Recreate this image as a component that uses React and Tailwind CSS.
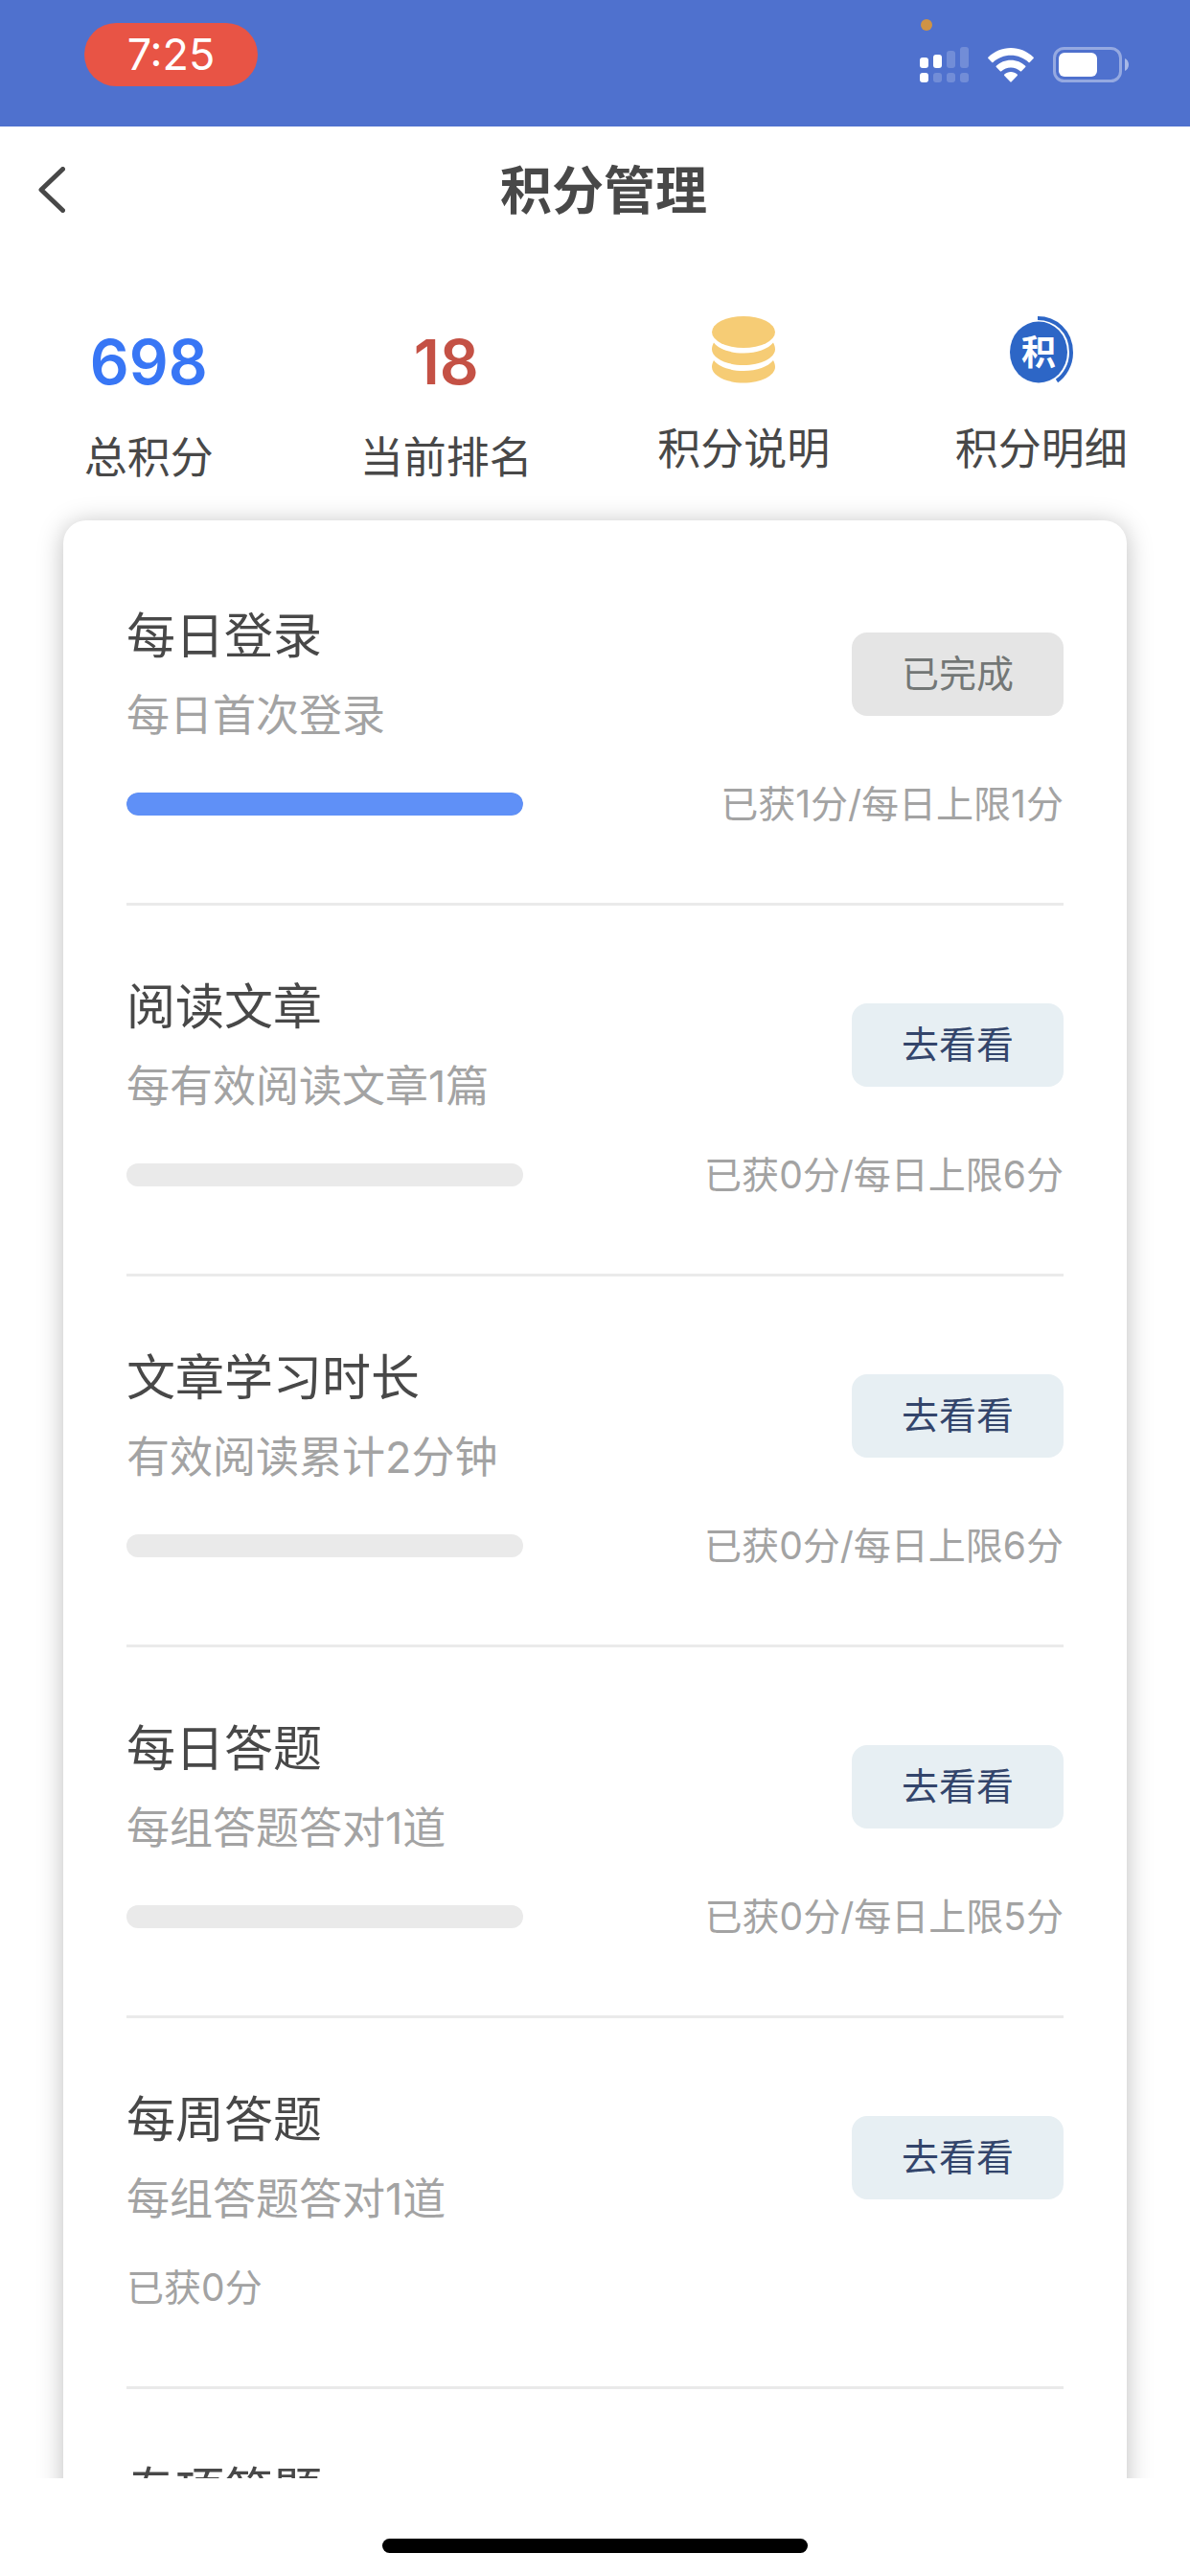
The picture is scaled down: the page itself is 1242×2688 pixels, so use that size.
import { useState } from 'react';

const tasks = [
  { title: '每日登录', desc: '每日首次登录', earned: 1, limit: 1 },
  { title: '阅读文章', desc: '每有效阅读文章1篇', earned: 0, limit: 6 },
  { title: '文章学习时长', desc: '有效阅读累计2分钟', earned: 0, limit: 6 },
  { title: '每日答题', desc: '每组答题答对1道', earned: 0, limit: 5 },
  { title: '每周答题', desc: '每组答题答对1道', earned: 0 },
  { title: '专项答题' },
];

function SignalIcon() {
  return (
    <svg className="w-[51px] h-[37px]" viewBox="0 0 51 37" fill="#fff">
      <rect x="0" y="11" width="9" height="11" rx="3" />
      <rect x="14" y="8" width="9" height="14" rx="3" />
      <rect x="28" y="4" width="9" height="18" rx="3" opacity="0.2" />
      <rect x="42" y="0" width="9" height="22" rx="3" opacity="0.2" />
      <rect x="0" y="27" width="9" height="10" rx="3" />
      <rect x="14" y="27" width="9" height="10" rx="3" opacity="0.2" />
      <rect x="28" y="27" width="9" height="10" rx="3" opacity="0.2" />
      <rect x="42" y="27" width="9" height="10" rx="3" opacity="0.2" />
    </svg>
  );
}

function WifiIcon() {
  return (
    <svg className="w-12 h-9" viewBox="0 0 48 36" fill="#fff">
      <path d="M24 0C33 0 41.500 3.700 47.600 9.700Q48.200 10.400 47.600 11L43.800 15Q43.200 15.600 42.500 15C37.600 10.500 31 7.800 24 7.800S10.400 10.500 5.500 15Q4.800 15.600 4.200 15L.400 11Q-.200 10.400 .400 9.700C6.500 3.700 15 0 24 0Z" />
      <path d="M24 12.700C29.900 12.700 35.200 15 39.200 18.700Q39.900 19.400 39.200 20.100L35.100 24.200Q34.500 24.700 33.800 24.200C31.200 21.900 27.800 20.500 24 20.500S16.800 21.900 14.200 24.200Q13.500 24.700 12.900 24.200L8.800 20.100Q8.100 19.400 8.800 18.700C12.800 15 18.100 12.700 24 12.700Z" />
      <path d="M24 25C26.500 25 28.900 25.900 30.700 27.500Q31.400 28.200 30.700 28.900L24.700 35.300Q24 36 23.300 35.300L17.300 28.900Q16.600 28.200 17.300 27.500C19.100 25.900 21.500 25 24 25Z" />
    </svg>
  );
}

function BatteryIcon() {
  return (
    <svg className="w-20 h-[37px]" viewBox="0 0 80 37">
      <rect x="1.500" y="1.500" width="69" height="34" rx="10" fill="none" stroke="#fff" strokeWidth="3" opacity="0.4" />
      <rect x="6" y="6" width="40" height="25" rx="6" fill="#fff" />
      <path d="M75 12C77.500 13 79 15.600 79 18.500S77.500 24 75 25Z" fill="#fff" opacity="0.5" />
    </svg>
  );
}

function CoinsIcon() {
  return (
    <svg className="w-[66px] h-[70px]" viewBox="0 0 66 70" fill="#f6cc75">
      <ellipse cx="33" cy="16.500" rx="33" ry="16.500" />
      <path d="M2 27.500C7 34 19 38.500 33 38.500S59 34 64 27.500C65.300 29.700 66 32 66 34.500C66 43.500 51 51 33 51S0 43.500 0 34.500C0 32 .700 29.700 2 27.500Z" />
      <path d="M2 46C7 52.500 19 57 33 57S59 52.500 64 46C65.300 48.200 66 50.500 66 53C66 62 51 69.500 33 69.500S0 62 0 53C0 50.500 .700 48.200 2 46Z" />
    </svg>
  );
}

function PointsIcon() {
  return (
    <svg className="w-[66px] h-[70px]" viewBox="0 0 66 70">
      <ellipse cx="30" cy="37.500" rx="30" ry="32" fill="#2d66c6" />
      <path d="M29 2C47 2 64 15 64 38C64 51 57 62 49 67.500" fill="none" stroke="#2d66c6" strokeWidth="4" />
      <text x="30" y="51" textAnchor="middle" fontSize="36" fontWeight="700" fill="#fff">积</text>
    </svg>
  );
}

function TaskRow({ task }) {
  const done = task.limit !== undefined && task.earned >= task.limit;

  return (
    <li className="pt-[74px] pb-20 border-b-3 border-[#eaeaea] last:border-b-0">
      <div className="flex items-center justify-between">
        <div>
          <h2 className="text-[51px] leading-16 text-[#484848]">{task.title}</h2>
          {task.desc && (
            <p className="mt-6 text-[45px] leading-[54px] text-[#a3a3a3]">{task.desc}</p>
          )}
        </div>
        {task.desc && (
          <button
            type="button"
            disabled={done}
            className={`w-[221px] h-[87px] rounded-2xl text-[39px] ${done ? 'bg-[#e5e5e5] text-[#737776]' : 'bg-[#e7eff3] text-[#33456b]'}`}
          >
            {done ? '已完成' : '去看看'}
          </button>
        )}
      </div>

      {task.desc && (
        <div className="mt-[42px] flex items-center justify-between text-[39px] leading-[46px] text-[#a3a3a3]">
          {task.limit === undefined ? (
            <span>已获{task.earned}分</span>
          ) : (
            <>
              <div className="w-[414px] h-6 rounded-full bg-[#eaeaea] overflow-hidden">
                <div
                  className="h-full rounded-full bg-[#5f90f7]"
                  style={{ width: `${(task.earned / task.limit) * 100}%` }}
                />
              </div>
              <span>已获{task.earned}分/每日上限{task.limit}分</span>
            </>
          )}
        </div>
      )}
    </li>
  );
}

export default function App() {
  const [stats] = useState({ total: 698, rank: 18 });

  return (
    <div className="h-screen flex flex-col bg-white overflow-hidden font-['Inter','Noto_Sans_CJK_SC',sans-serif]">
      {/* Status bar */}
      <div className="h-[132px] shrink-0 bg-[#4f71ce] flex items-start justify-between pl-22 pr-[63px]">
        <div className="mt-6 w-[181px] h-[66px] rounded-full bg-[#e85445] text-white text-[45px] leading-[66px] text-center">
          7:25
        </div>
        <div className="relative mt-[49px] flex items-center gap-5">
          <span className="absolute left-px -top-[29px] size-3 rounded-full bg-[#cf9345]" />
          <SignalIcon />
          <WifiIcon />
          <BatteryIcon />
        </div>
      </div>

      {/* Header */}
      <header className="h-[132px] shrink-0 flex items-center pl-10 pr-[50px]">
        <button type="button" aria-label="返回" className="w-7 h-12">
          <svg viewBox="0 0 28 48" fill="none" stroke="#484848" strokeWidth="5" strokeLinecap="round" strokeLinejoin="round">
            <path d="M25.500 2.500L3 24L25.500 45.500" />
          </svg>
        </button>
        <h1 className="flex-1 pt-1 text-center text-[54px] leading-16 font-semibold text-[#484848]">积分管理</h1>
      </header>

      <main className="flex-1 min-h-0 overflow-y-auto [scrollbar-width:none]">
        {/* Stats */}
        <div className="grid grid-cols-4 pt-[66px] pb-[38px] text-center text-[45px] leading-[54px] text-[#484848]">
          <div>
            <p className="text-[64px] leading-[96px] font-semibold text-[#3876f5]">{stats.total}</p>
            <p className="mt-[25px]">总积分</p>
          </div>
          <div>
            <p className="text-[64px] leading-[96px] font-semibold text-[#c45145]">{stats.rank}</p>
            <p className="mt-[25px]">当前排名</p>
          </div>
          <button type="button" className="flex flex-col items-center gap-[42px]">
            <CoinsIcon />
            积分说明
          </button>
          <button type="button" className="flex flex-col items-center gap-[42px]">
            <PointsIcon />
            积分明细
          </button>
        </div>

        {/* Tasks */}
        <ul className="mx-[66px] px-[66px] pt-[15px] rounded-3xl bg-white shadow-[0_3px_27px_rgba(0,0,0,0.26)]">
          {tasks.map((task) => (
            <TaskRow key={task.title} task={task} />
          ))}
        </ul>
      </main>

      {/* Home indicator */}
      <div className="h-[102px] shrink-0 flex justify-center items-end pb-6">
        <div className="w-[444px] h-[15px] rounded-full bg-black" />
      </div>
    </div>
  );
}
